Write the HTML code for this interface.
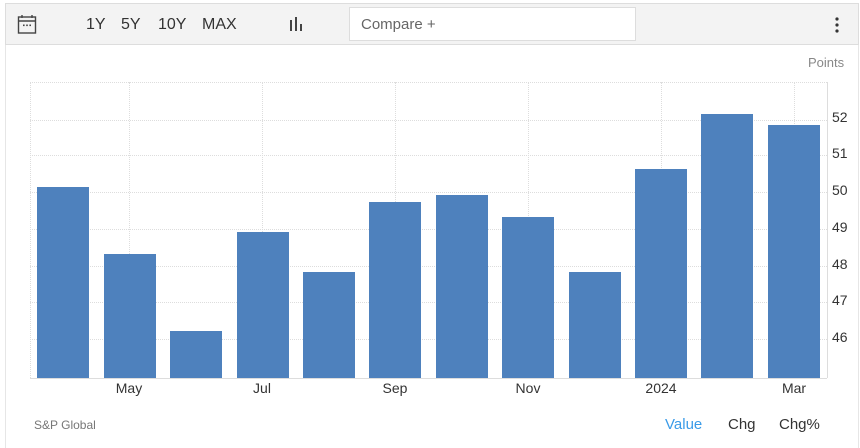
<!DOCTYPE html>
<html><head><style>
html,body{margin:0;width:860px;height:448px;overflow:hidden}
body{background:#fff;font-family:"Liberation Sans",Arial,sans-serif;position:relative}
.tb{position:absolute;left:5px;top:3px;width:852px;height:40px;background:#f3f3f3;border:1px solid #ddd}
.wrap{position:absolute;left:5px;top:3px;width:852px;height:446px;border:1px solid #e6e6e6;border-bottom:none}
.t{position:absolute;font-size:16px;color:#333}
.cmp{position:absolute;left:349px;top:7px;width:287px;height:34px;background:#fff;border:1px solid #ddd;box-sizing:border-box;font-size:15px;color:#666;padding:8px 11px}
.bar{position:absolute;background:#4e81bd;width:52px}
.gl{position:absolute;border-top:1px dotted #ddd;left:30px;width:797px;height:0}
.vl{position:absolute;border-left:1px dotted #ddd;top:82px;height:296px;width:0}
.yl{position:absolute;left:832px;font-size:14px;color:#333}
.xl{position:absolute;top:380px;font-size:14px;color:#333;width:60px;text-align:center}
</style></head><body>
<div class="wrap"></div>
<div class="tb"></div>
<svg style="position:absolute;left:17px;top:14px" width="20" height="21" viewBox="0 0 20 21"><rect x="1.5" y="3" width="17" height="16" fill="none" stroke="#444" stroke-width="1.4"/><line x1="1.5" y1="7" x2="18.5" y2="7" stroke="#444" stroke-width="1.4"/><line x1="5" y1="1" x2="5" y2="4" stroke="#444" stroke-width="1.4"/><line x1="15" y1="1" x2="15" y2="4" stroke="#444" stroke-width="1.4"/><rect x="6" y="10.5" width="1.6" height="1.6" fill="#444"/><rect x="9.2" y="10.5" width="1.6" height="1.6" fill="#444"/><rect x="12.4" y="10.5" width="1.6" height="1.6" fill="#444"/></svg>
<div class="t" style="left:86px;top:16px">1Y</div>
<div class="t" style="left:121px;top:16px">5Y</div>
<div class="t" style="left:158px;top:16px">10Y</div>
<div class="t" style="left:202px;top:16px">MAX</div>
<svg style="position:absolute;left:289px;top:16px" width="16" height="16"><rect x="1" y="4" width="2" height="11" fill="#444"/><rect x="6" y="1" width="2" height="14" fill="#444"/><rect x="11" y="8" width="2" height="7" fill="#444"/></svg>
<div class="cmp">Compare +</div>
<svg style="position:absolute;left:834px;top:17px" width="6" height="16"><circle cx="3" cy="2" r="1.6" fill="#333"/><circle cx="3" cy="8" r="1.6" fill="#333"/><circle cx="3" cy="14" r="1.6" fill="#333"/></svg>
<div style="position:absolute;left:808px;top:55px;font-size:13px;color:#888">Points</div>
<div class="gl" style="top:82px"></div>
<div class="gl" style="top:120px"></div><div class="gl" style="top:155px"></div><div class="gl" style="top:192px"></div><div class="gl" style="top:229px"></div><div class="gl" style="top:266px"></div><div class="gl" style="top:302px"></div><div class="gl" style="top:339px"></div>
<div class="vl" style="left:30px"></div><div class="vl" style="left:129px"></div><div class="vl" style="left:262px"></div><div class="vl" style="left:395px"></div><div class="vl" style="left:528px"></div><div class="vl" style="left:661px"></div><div class="vl" style="left:794px"></div>
<div style="position:absolute;left:827px;top:82px;height:296px;border-left:1px solid #ddd"></div>
<div style="position:absolute;left:30px;top:378px;width:797px;border-top:1px solid #ddd"></div>
<div class="bar" style="left:37px;top:187px;height:191px"></div>
<div class="bar" style="left:104px;top:254px;height:124px"></div>
<div class="bar" style="left:170px;top:331px;height:47px"></div>
<div class="bar" style="left:237px;top:232px;height:146px"></div>
<div class="bar" style="left:303px;top:272px;height:106px"></div>
<div class="bar" style="left:369px;top:202px;height:176px"></div>
<div class="bar" style="left:436px;top:195px;height:183px"></div>
<div class="bar" style="left:502px;top:217px;height:161px"></div>
<div class="bar" style="left:569px;top:272px;height:106px"></div>
<div class="bar" style="left:635px;top:169px;height:209px"></div>
<div class="bar" style="left:701px;top:114px;height:264px"></div>
<div class="bar" style="left:768px;top:125px;height:253px"></div>
<div class="yl" style="top:109px">52</div><div class="yl" style="top:145px">51</div><div class="yl" style="top:182px">50</div><div class="yl" style="top:219px">49</div><div class="yl" style="top:256px">48</div><div class="yl" style="top:292px">47</div><div class="yl" style="top:329px">46</div>
<div class="xl" style="left:99px">May</div><div class="xl" style="left:232px">Jul</div><div class="xl" style="left:365px">Sep</div><div class="xl" style="left:498px">Nov</div><div class="xl" style="left:631px">2024</div><div class="xl" style="left:764px">Mar</div>
<div style="position:absolute;left:34px;top:418px;font-size:12px;color:#777">S&amp;P Global</div>
<div style="position:absolute;left:665px;top:416px;font-size:15px;color:#3a9be8">Value</div>
<div style="position:absolute;left:728px;top:416px;font-size:15px;color:#333">Chg</div>
<div style="position:absolute;left:779px;top:416px;font-size:15px;color:#333">Chg%</div>
</body></html>
